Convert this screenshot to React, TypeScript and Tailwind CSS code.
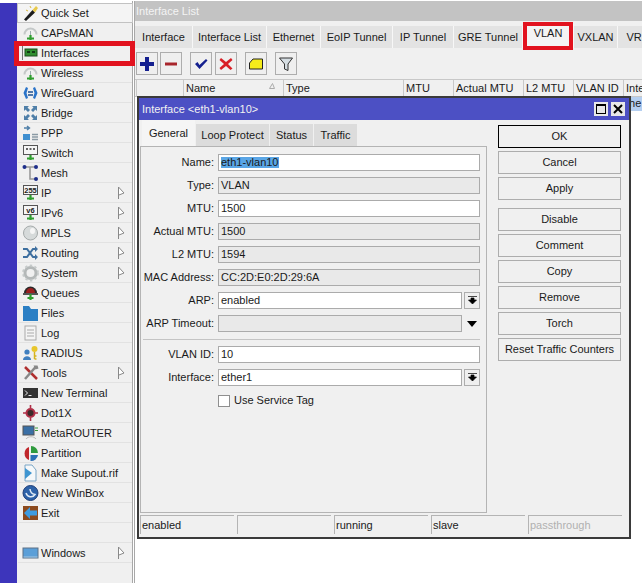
import type { ReactNode } from "react";

const green = "#2f9e2f";

function Base() {
  return <path d="M8.500 11v5M5 14.500h7" stroke={green} strokeWidth="2.200" fill="none" />;
}

const icons: Record<string, ReactNode> = {
  wand: (
    <>
      <path d="M2 15.500 10.500 6l2.500 2.500L4 17Z" fill="#1c1c1c" />
      <path d="M10.500 6l3.500-4 2 2-3 4.500Z" fill="#e8c94a" />
      <path d="M8 2l1 2M4 6l2 1" stroke="#d9b93a" strokeWidth="1" />
    </>
  ),
  antenna: (
    <>
      <path d="M2.500 10.500a6 6 0 0 1 12 0" stroke="#c4c8c8" strokeWidth="2" fill="none" />
      <path d="M8.500 7v6" stroke="#9aa" strokeWidth="1" />
      <Base />
    </>
  ),
  card: (
    <>
      <path d="M.5 2v14" stroke="#777" strokeWidth="1" />
      <rect x="3" y="5" width="12" height="7" fill="#2f8f2f" stroke="#1d4d1d" />
      <path d="M5 8h3M10 8h3" stroke="#123a12" strokeWidth="2" />
    </>
  ),
  guard: (
    <>
      <path d="M4 3 1.500 9 4 15l2-1-1.500-5L6 4Z" fill="#2a73c9" />
      <path d="M13 3l2.500 6-2.500 6-2-1 1.500-5L11 4Z" fill="#2a73c9" />
      <path d="M6 8h5M6 11h5" stroke="#1c4f91" strokeWidth="1.400" />
    </>
  ),
  bridge: (
    <g fill="#4f7fa8">
      <path d="M2 2h5L5.500 3.500 8 6 6 8 3.500 5.500 2 7Z" />
      <path d="M15 2h-5l1.500 1.500L9 6l2 2 2.500-2.500L15 7Z" />
      <path d="M2 16h5l-1.500-1.500L8 12l-2-2-2.500 2.500L2 11Z" />
      <path d="M15 16h-5l1.500-1.500L9 12l2-2 2.500 2.500L15 11Z" />
    </g>
  ),
  ppp: (
    <>
      <path d="M2 4h5M5 2l2.500 2L5 6" stroke="#4f7fa8" strokeWidth="1.400" fill="none" />
      <rect x="1" y="10" width="7" height="6" fill="#3f8fd0" />
      <path d="M10 10.500h6M10 13h6M10 15.500h6" stroke="#8a9aa5" strokeWidth="1.300" />
    </>
  ),
  switch: (
    <>
      <rect x="1.500" y="1.500" width="14" height="9" fill="#f5f5f5" stroke="#555" />
      <path d="M4 5h2M7.500 5h2M11 5h2" stroke="#333" strokeWidth="1.500" />
      <Base />
    </>
  ),
  mesh: (
    <>
      <path d="M3 3h5v12h5M8 3h5" stroke="#999" strokeWidth="1.600" fill="none" />
      <circle cx="2.500" cy="3" r="2" fill="#1e2f8a" />
      <circle cx="14" cy="3" r="2" fill="#1e2f8a" />
      <circle cx="14" cy="15" r="2" fill="#1e2f8a" />
    </>
  ),
  ip: (
    <>
      <rect x="1.500" y="1.500" width="14" height="9" fill="#f5f5f5" stroke="#555" />
      <text x="8.500" y="9" textAnchor="middle" fontSize="7.500" fontWeight="700" fill="#222" fontFamily="Liberation Sans, sans-serif">255</text>
      <Base />
    </>
  ),
  ipv6: (
    <>
      <rect x="1.500" y="1.500" width="14" height="9" fill="#f5f5f5" stroke="#555" />
      <text x="8.500" y="9" textAnchor="middle" fontSize="7.500" fontWeight="700" fill="#222" fontFamily="Liberation Sans, sans-serif">v6</text>
      <Base />
    </>
  ),
  disc: (
    <>
      <circle cx="8.500" cy="9" r="7" fill="#d6dada" stroke="#a5aaaa" />
      <ellipse cx="10.500" cy="7" rx="2.500" ry="3" fill="#f6f6f6" />
    </>
  ),
  routing: (
    <>
      <path d="M1 5h4l6 8h3M1 13h4l6-8h3" stroke="#3e6f9f" strokeWidth="2" fill="none" />
      <path d="M13 2l3 3-3 3ZM13 10l3 3-3 3Z" fill="#3e6f9f" />
    </>
  ),
  gear: (
    <>
      <circle cx="8.500" cy="9" r="5.500" fill="none" stroke="#b4b8b8" strokeWidth="3" />
      <circle cx="8.500" cy="9" r="7.500" fill="none" stroke="#c6caca" strokeWidth="1.800" strokeDasharray="2.500 2.400" />
    </>
  ),
  queues: (
    <>
      <path d="M2 9a6.500 6.500 0 0 1 13 0Z" fill="#2a2a2a" />
      <path d="M4 9a4.500 5 0 0 1 9 0Z" fill="#9c2020" />
      <path d="M1 10h15" stroke="#222" strokeWidth="1.500" />
      <path d="M8.500 10v6M5.500 14h6" stroke={green} strokeWidth="2.200" />
    </>
  ),
  folder: <path d="M1 2h6l2 3h7v12H1Z" fill="#2b7fc4" />,
  log: (
    <>
      <rect x="3" y="2" width="11" height="14" fill="#f4f4f4" stroke="#aaa" />
      <path d="M5 6h7M5 9h7M5 12h7" stroke="#aaa" />
    </>
  ),
  radius: (
    <>
      <circle cx="5" cy="8" r="2.600" fill="#3f7fbf" />
      <path d="M1 16c0-5 8-5 8 0Z" fill="#3f7fbf" />
      <circle cx="12.500" cy="5" r="3" fill="#e8c62c" />
      <path d="M12.500 8v7M12.500 12h2M12.500 15h2" stroke="#d5b420" strokeWidth="1.500" />
    </>
  ),
  tools: (
    <>
      <path d="M3 3l12 12" stroke="#b03030" strokeWidth="2.500" />
      <path d="M14 2.500 3 15" stroke="#888" strokeWidth="2.500" />
      <path d="M11.500 1.500h4l1 3-3 1Z" fill="#888" />
    </>
  ),
  terminal: (
    <>
      <rect x="1" y="4" width="15" height="10" fill="#333" />
      <path d="M3 6.500 5.500 9 3 11.500" stroke="#eee" fill="none" />
      <path d="M6.500 11.500h3" stroke="#eee" />
    </>
  ),
  dot: (
    <>
      <circle cx="8.500" cy="9" r="4" fill="#3b2a2a" stroke="#b03048" strokeWidth="2" />
      <path d="M8.500 1v3M8.500 14v3M1 9h3M13 9h3" stroke="#b03048" strokeWidth="1.600" />
    </>
  ),
  meta: (
    <>
      <rect x="1" y="2" width="11" height="9" fill="#3a6fa5" stroke="#555" />
      <path d="M13 4h3M13 6.500h3" stroke="#3c9c3c" strokeWidth="1.200" />
      <path d="M4 15c2-3 8-3 10 0" stroke="#bbb" fill="none" />
    </>
  ),
  pie: (
    <>
      <path d="M7 3a7 7 0 0 0 0 13Z" fill="#c0282c" />
      <path d="M9 2a7 7 0 0 1 7 7H9Z" fill="#2e9a3e" />
      <path d="M8.500 11H16a7 7 0 0 1-7.500 6Z" fill="#2b6fb5" />
    </>
  ),
  doc: (
    <>
      <path d="M3 1h7l4 5v11H3Z" fill="#f5f8fa" stroke="#7aa6c6" />
      <path d="M3 4l7 5-7 6Z" fill="#3f95d0" />
    </>
  ),
  winbox: (
    <>
      <circle cx="8.500" cy="9" r="7.500" fill="#2d62a8" stroke="#1f3f78" />
      <path d="M4 9a5 5 0 0 0 9 1.500A6 6 0 0 1 8 5" stroke="#dfeaf5" strokeWidth="1.500" fill="none" />
    </>
  ),
  exit: (
    <>
      <rect x="1" y="2" width="15" height="14" fill="#8c4a1e" />
      <path d="M15 6.500H8V3L2 9l6 6v-3.500h7Z" fill="#3d9be0" />
    </>
  ),
  windows: (
    <>
      <rect x="1" y="4" width="15" height="10" fill="#5b9fd8" stroke="#5c7186" />
      <path d="M1.500 13h14" stroke="#a8c6e0" />
    </>
  ),
};

const menu = [
  { name: "Quick Set", icon: "wand" },
  { name: "CAPsMAN", icon: "antenna" },
  { name: "Interfaces", icon: "card" },
  { name: "Wireless", icon: "antenna" },
  { name: "WireGuard", icon: "guard" },
  { name: "Bridge", icon: "bridge" },
  { name: "PPP", icon: "ppp" },
  { name: "Switch", icon: "switch" },
  { name: "Mesh", icon: "mesh" },
  { name: "IP", icon: "ip", sub: true },
  { name: "IPv6", icon: "ipv6", sub: true },
  { name: "MPLS", icon: "disc", sub: true },
  { name: "Routing", icon: "routing", sub: true },
  { name: "System", icon: "gear", sub: true },
  { name: "Queues", icon: "queues" },
  { name: "Files", icon: "folder" },
  { name: "Log", icon: "log" },
  { name: "RADIUS", icon: "radius" },
  { name: "Tools", icon: "tools", sub: true },
  { name: "New Terminal", icon: "terminal" },
  { name: "Dot1X", icon: "dot" },
  { name: "MetaROUTER", icon: "meta" },
  { name: "Partition", icon: "pie" },
  { name: "Make Supout.rif", icon: "doc" },
  { name: "New WinBox", icon: "winbox" },
  { name: "Exit", icon: "exit" },
  { name: "", icon: "" },
  { name: "Windows", icon: "windows", sub: true },
];

const listTabs = [
  { label: "Interface", w: "w-[58px]" },
  { label: "Interface List", w: "w-[74px]" },
  { label: "Ethernet", w: "w-[54px]" },
  { label: "EoIP Tunnel", w: "w-[72px]" },
  { label: "IP Tunnel", w: "w-[61px]" },
  { label: "GRE Tunnel", w: "w-[69px]" },
  { label: "VLAN", w: "w-[51px]", active: true },
  { label: "VXLAN", w: "w-[44px]" },
  { label: "VRF", w: "w-[40px]" },
];

const columns = [
  { label: "", w: "w-[47px]" },
  { label: "Name", w: "w-[100px]", sort: true },
  { label: "Type", w: "w-[120px]" },
  { label: "MTU", w: "w-[50px]" },
  { label: "Actual MTU", w: "w-[70px]" },
  { label: "L2 MTU", w: "w-[50px]" },
  { label: "VLAN ID", w: "w-[50px]" },
  { label: "Inter", w: "w-[30px]" },
];

const actions = ["OK", "Cancel", "Apply", "Disable", "Comment", "Copy", "Remove", "Torch", "Reset Traffic Counters"];

function MenuRow({ name, icon, sub, first }: { name: string; icon: string; sub?: boolean; first?: boolean }) {
  return (
    <div className={`relative flex h-[20px] items-center pl-[4px] ${first ? "-mx-px border border-[#c2c2c2] bg-[#f4f4f4]" : "border-b border-[#e2e2e2] pt-px"}`}>
      {icon && (
        <svg width="17" height="18" viewBox="0 0 17 18" className="shrink-0">
          {icons[icon]}
        </svg>
      )}
      <span className="pl-[2px]">{name}</span>
      {sub && (
        <svg width="7" height="14" viewBox="0 0 7 14" className="absolute left-[100px] top-[3px]">
          <path d="M.5 1v12M.5 1 6 7 1 9" stroke="#888" fill="#fff" />
        </svg>
      )}
    </div>
  );
}

function ToolButton({ children, className }: { children: ReactNode; className?: string }) {
  return (
    <div className={`flex h-[23px] w-[22px] items-center justify-center border border-[#adadad] bg-[#efefef] ${className ?? ""}`}>
      <svg width="16" height="16" viewBox="0 0 16 16">
        {children}
      </svg>
    </div>
  );
}

function Field({ label, value, off, drop, caret }: { label: string; value?: ReactNode; off?: boolean; drop?: boolean; caret?: boolean }) {
  return (
    <div className="flex h-[17px] items-center">
      <span className="w-[71px] shrink-0 whitespace-nowrap text-right">{label}:</span>
      <div className={`ml-[4px] flex h-[17px] min-w-0 flex-1 items-center border border-[#ababab] pl-[2px] ${off ? "bg-[#e9e9e9]" : "bg-white"}`}>
        {value}
      </div>
      {drop && (
        <div className="ml-[2px] flex h-[17px] w-[16px] items-center justify-center border border-[#adadad] bg-[#efefef]">
          <svg width="9" height="9" viewBox="0 0 9 9">
            <path d="M0 .5h9M3 2h3v2h2.500L4.500 8 .5 4H3Z" stroke="#000" strokeWidth=".7" fill="#000" />
          </svg>
        </div>
      )}
      {caret && (
        <div className="ml-[2px] flex h-[17px] w-[16px] items-center justify-center">
          <svg width="10" height="6" viewBox="0 0 10 6">
            <path d="M0 0h10L5 6Z" fill="#000" />
          </svg>
        </div>
      )}
    </div>
  );
}

export default function App() {
  return (
    <div className="relative flex h-[583px] w-[642px] overflow-hidden bg-white font-['Liberation_Sans',sans-serif] text-[11px] leading-none text-[#1a1a1a]">
      <div className="mt-[3px] w-[17px] shrink-0 bg-[#3d35bb]" />

      {/* Main menu */}
      <aside className="mt-[3px] w-[115px] shrink-0 bg-[#f0f0f0] pl-[1px]">
        {menu.map((item, i) => (
          <MenuRow key={i} name={item.name} icon={item.icon} sub={item.sub} first={i === 0} />
        ))}
      </aside>

      {/* Interface List window */}
      <main className="mt-px min-w-0 flex-1 border-l border-[#a8a8a8] pl-px">
        <div className="h-full border-l border-[#a8a8a8]">
          <div className="flex h-[20px] items-center bg-[#c3c3c3] pl-px text-[#f4f4f4]">Interface List</div>
          <div className="bg-[#f0f0f0]">
            <div className="flex h-[27px] items-end">
              {listTabs.map((t) => (
                <div
                  key={t.label}
                  className={`${t.w} flex shrink-0 items-center justify-center whitespace-nowrap border-r border-[#f7f7f7] ${t.active ? "h-[24px] bg-[#f4f4f4] pb-[5px]" : "h-[22px] bg-[#e3e3e3]"}`}
                >
                  {t.label}
                </div>
              ))}
            </div>
            <div className="flex h-[31px] items-center pl-px">
              <ToolButton>
                <path d="M6 1h4v5h5v4h-5v5H6v-5H1V6h5Z" fill="#15208f" />
              </ToolButton>
              <ToolButton className="ml-[2px]">
                <path d="M2 6.500h12v3H2Z" fill="#a8262c" />
              </ToolButton>
              <ToolButton className="ml-[8px]">
                <path d="m2 8 2.500-2L6.500 9 13 3l1.500 1.500L6.500 13Z" fill="#15208f" />
              </ToolButton>
              <ToolButton className="ml-[3px]">
                <path d="m3 2 5 4 5-4 1.500 2-4.500 4 4.500 4.500-2 1.500L8 10l-5 4-1.500-2L6 8 1.500 4Z" fill="#d81f26" />
              </ToolButton>
              <ToolButton className="ml-[8px]">
                <path d="M5 3h9.500v10h-13V7Z" fill="#f5ec1a" stroke="#222" />
              </ToolButton>
              <ToolButton className="ml-[8px]">
                <path d="M1.500 2h13L10 8v6.500L6.500 13V8Z" fill="#d5dde2" stroke="#333" />
              </ToolButton>
            </div>
            <div className="flex h-[18px] border-y border-[#c8c8c8] pl-px">
              {columns.map((c) => (
                <div key={c.label} className={`${c.w} relative flex shrink-0 items-center whitespace-nowrap border-l border-[#c8c8c8] pl-[2px]`}>
                  {c.label}
                  {c.sort && (
                    <svg width="6" height="6" viewBox="0 0 6 6" className="absolute right-[8px] top-[3px]">
                      <path d="M.5 5.500h5L3.500.5Z" stroke="#aaa" fill="none" />
                    </svg>
                  )}
                </div>
              ))}
            </div>
          </div>
          <div className="flex h-[14px] justify-end bg-white">
            <div className="w-[18px] bg-[#b5cff0] pl-[2px] pt-px">the</div>
          </div>
        </div>
      </main>

      {/* Dialog window */}
      <section className="absolute left-[137px] top-[96px] flex h-[443px] w-[494px] flex-col border-2 border-[#3a3a3a] bg-[#f0f0f0]">
        <header className="flex h-[22px] shrink-0 items-center justify-between bg-[#4c50c4] pl-[3px] pr-[4px] text-[#f2f2f2]">
          <span>Interface &lt;eth1-vlan10&gt;</span>
          <div className="flex gap-[3px]">
            <div className="flex h-[14px] w-[14px] items-center justify-center bg-[#e8e8e8]">
              <div className="h-[10px] w-[10px] border border-black border-t-2" />
            </div>
            <div className="flex h-[14px] w-[14px] items-center justify-center bg-[#e8e8e8]">
              <svg width="10" height="10" viewBox="0 0 10 10">
                <path d="m1 1 8 8M9 1 1 9" stroke="#000" strokeWidth="2" />
              </svg>
            </div>
          </div>
        </header>

        <div className="flex min-h-0 flex-1 pl-px">
          <div className="flex w-[347px] shrink-0 flex-col">
            <div className="flex h-[26px] shrink-0 items-end pl-[2px]">
              <div className="flex h-[26px] w-[53px] items-center justify-center bg-[#f5f5f5]">General</div>
              <div className="ml-px flex h-[22px] w-[73px] items-center justify-center bg-[#dcdcdc]">Loop Protect</div>
              <div className="ml-px flex h-[22px] w-[43px] items-center justify-center bg-[#dcdcdc]">Status</div>
              <div className="ml-px flex h-[22px] w-[43px] items-center justify-center bg-[#dcdcdc]">Traffic</div>
            </div>
            <div className="flex h-[367px] flex-col gap-[6px] border border-[#b4b4b4] bg-[#f0f0f0] pl-[2px] pr-[6px] pt-[7px]">
              <Field label="Name" value={<span className="bg-[#5aa6e6]">eth1-vlan10</span>} />
              <Field label="Type" value="VLAN" off />
              <Field label="MTU" value="1500" />
              <Field label="Actual MTU" value="1500" off />
              <Field label="L2 MTU" value="1594" off />
              <Field label="MAC Address" value="CC:2D:E0:2D:29:6A" off />
              <Field label="ARP" value="enabled" drop />
              <Field label="ARP Timeout" off caret />
              <div className="mt-px h-px bg-[#c4c4c4]" />
              <Field label="VLAN ID" value="10" />
              <Field label="Interface" value="ether1" drop />
              <label className="ml-[75px] flex h-[17px] items-center gap-[4px]">
                <span className="h-[12px] w-[12px] border border-[#8f8f8f] bg-white" />
                Use Service Tag
              </label>
            </div>
          </div>

          <div className="ml-[11px] flex w-[123px] shrink-0 flex-col pt-[5px]">
            {actions.map((label, i) => (
              <div
                key={label}
                className={`flex h-[23px] shrink-0 items-center justify-center whitespace-nowrap border ${i === 0 ? "border-black" : "border-[#adadad]"} ${i === 3 ? "mt-[8px]" : i > 0 ? "mt-[3px]" : ""}`}
              >
                {label}
              </div>
            ))}
          </div>
        </div>

        <footer className="flex h-[22px] shrink-0 gap-[3px] pb-[2px] pl-px">
          {["enabled", "", "running", "slave", "passthrough"].map((s, i) => (
            <div key={i} className={`flex h-[19px] w-[94px] items-center border-l border-t border-[#b4b4b4] pl-px ${s === "passthrough" ? "text-[#b0b0b0]" : ""}`}>
              {s}
            </div>
          ))}
        </footer>
      </section>

      {/* Red highlights drawn on the screenshot */}
      <div className="absolute left-[14px] top-[41px] h-[25px] w-[121px] border-[5px] border-[#e2131f]" />
      <div className="absolute left-[523px] top-[22px] h-[28px] w-[50px] border-[4px] border-[#e2131f]" />
    </div>
  );
}
